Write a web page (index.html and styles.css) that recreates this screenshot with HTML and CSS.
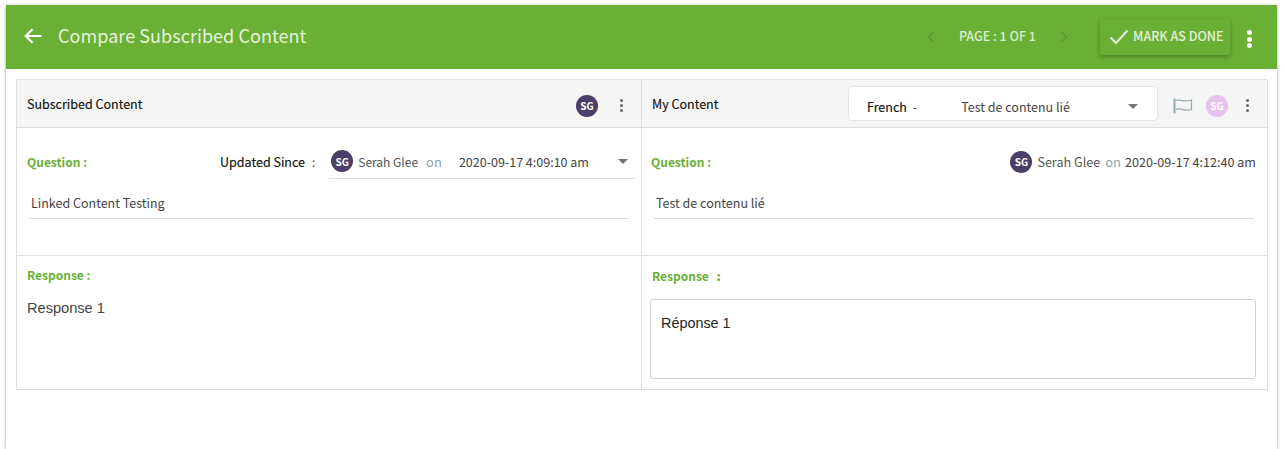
FILE: index.html
```html
<!DOCTYPE html>
<html lang="en">
<head>
<meta charset="utf-8">
<title>Compare Subscribed Content</title>
<link rel="stylesheet" href="styles.css">
</head>
<body>
<div class="frame">
  <header class="topbar">
    <svg class="back" width="20" height="18" viewBox="0 0 20 18"><path d="M18.5 9H3M9.5 2.2 2.7 9l6.8 6.8" fill="none" stroke="#fff" stroke-width="2.2"/></svg>
    <h1 class="title">Compare Subscribed Content</h1>
    <div class="pager">
      <svg width="10" height="14" viewBox="0 0 10 14"><path d="M8 1.5 2.5 7 8 12.500" fill="none" stroke="#5d9a33" stroke-width="1.600"/></svg>
      <span class="page-text">PAGE : 1 OF 1</span>
      <svg width="10" height="14" viewBox="0 0 10 14"><path d="M2 1.500 7.500 7 2 12.500" fill="none" stroke="#5d9a33" stroke-width="1.600"/></svg>
    </div>
    <button class="done">
      <svg width="20" height="16" viewBox="0 0 20 16"><path d="M1.500 8.500 7 14 18.500 1.500" fill="none" stroke="#e8f3df" stroke-width="2"/></svg>
      <span>MARK AS DONE</span>
    </button>
    <div class="kebab kebab-white"><i></i><i></i><i></i></div>
  </header>
  <main class="compare">
    <section class="cell head">
      <h2 class="head-title">Subscribed Content</h2>
      <span class="avatar dark push">SG</span>
      <div class="kebab kebab-grey"><i></i><i></i><i></i></div>
    </section>
    <section class="cell head head-right">
      <h2 class="head-title">My Content</h2>
      <div class="lang">
        <span class="lang-name">French</span><span class="lang-dash">-</span>
        <span class="lang-value">Test de contenu lié</span>
        <span class="caret"></span>
      </div>
      <svg class="flag" width="20" height="16" viewBox="0 0 20 16"><path d="M1.500 0.500V15.500" stroke="#93aab2" stroke-width="2" fill="none"/><path d="M2.500 2.500C7 0.500 10 5 18.500 2V11.500C11 14 7 9 2.500 11.500" fill="none" stroke="#93aab2" stroke-width="1.200"/></svg>
      <span class="avatar pink">SG</span>
      <div class="kebab kebab-grey"><i></i><i></i><i></i></div>
    </section>

    <section class="cell question">
      <div class="q-top">
        <span class="label">Question :</span>
        <span class="since">Updated Since <em>:</em></span>
        <div class="version">
          <span class="avatar dark">SG</span>
          <span class="who">Serah Glee</span><span class="on">on</span>
          <span class="date">2020-09-17 4:09:10 am</span>
          <span class="caret"></span>
        </div>
      </div>
      <p class="q-text">Linked Content Testing</p>
    </section>
    <section class="cell question question-right">
      <div class="q-top">
        <span class="label">Question :</span>
        <div class="stamp">
          <span class="avatar dark">SG</span>
          <span class="who">Serah Glee</span><span class="on">on</span>
          <span class="date">2020-09-17 4:12:40 am</span>
        </div>
      </div>
      <p class="q-text">Test de contenu lié</p>
    </section>

    <section class="cell response">
      <span class="label">Response :</span>
      <p class="r-text">Response 1</p>
    </section>
    <section class="cell response response-right">
      <span class="label">Response <b>:</b></span>
      <div class="editor">Réponse 1</div>
    </section>
  </main>
</div>
</body>
</html>
```
FILE: styles.css
```css
* { box-sizing: border-box; }
html, body { margin: 0; height: 100%; overflow: hidden; background: #fff; }
body {
  padding: 5px 7px 0 6px;
  font-family: "Noto Sans CJK SC", "Noto Sans", sans-serif;
  color: #333;
}
.frame { height: 444px; box-shadow: 0 3px 3px 0 rgba(0,0,0,.2), 0 0 3px rgba(0,0,0,.22); background: #fff; }
.topbar {
  height: 64px;
  background: #6ab035;
  display: flex;
  align-items: center;
  padding-left: 17px;
  color: #fff;
}
.back { flex: none; margin-bottom: 2px; }
.title { margin: 0 0 4px 15px; font-size: 18px; font-weight: 400; color: #e6f2dc; line-height: 24px; letter-spacing: .05px; }
.pager { margin-left: auto; display: flex; align-items: center; font-size: 12.5px; font-weight: 500; color: #dcedcd; }
.page-text { margin: 0 23px 4px 23px; }
.done {
  margin-left: 31px;
  width: 130px;
  height: 36px;
  border: 0;
  border-radius: 2px;
  background: #6ab035;
  box-shadow: 0 2px 5px rgba(0,0,0,.28);
  display: flex;
  align-items: center;
  gap: 4px;
  padding: 0 0 4px 9px;
  font: 500 12.5px "Noto Sans CJK SC", "Noto Sans", sans-serif;
  color: #e4f1d9;
}
.done svg { margin-top: 4px; flex: none; }
.kebab { display: flex; flex-direction: column; align-items: center; flex: none; }
.kebab i { display: block; border-radius: 50%; }
.kebab-white { margin: 4px 25px 0 17px; gap: 1.5px; }
.kebab-white i { width: 5px; height: 5px; background: #fff; }
.kebab-grey { gap: 2px; }
.kebab-grey i { width: 3px; height: 3px; background: #666; }
.compare {
  margin: 10px 10px 0;
  display: grid;
  grid-template-columns: 625px 626px;
  grid-template-rows: 48px 128px 134px;
  border-top: 1px solid #dedede;
  border-left: 1px solid #dedede;
}
.cell { border-right: 1px solid #dedede; border-bottom: 1px solid #dedede; min-width: 0; }
.head { background: #f5f5f5; display: flex; align-items: center; padding: 4px 0 0 10px; }
.head-title { margin: 0 0 4px; font-size: 12.5px; font-weight: 400; color: #111; line-height: 18px; white-space: nowrap; -webkit-text-stroke: .15px #111; }
.push { margin-left: auto; }
.head > .kebab { margin: 0 18px 0 22px; }
.head-right > .kebab { margin: 0 18px 0 18px; }
.avatar {
  flex: none;
  width: 22px; height: 22px;
  border-radius: 50%;
  display: inline-flex; align-items: center; justify-content: center;
  font-size: 10px; font-weight: 700; color: #fff;
}
.dark { background: #4c3f67; }
.pink { background: #e6c3ef; margin-left: 13px; }
.lang {
  margin-left: auto;
  width: 310px;
  height: 35px;
  margin-top: -4px;
  background: #fff;
  border: 1px solid #dce6ea;
  border-radius: 4px;
  display: flex;
  align-items: center;
  padding: 6px 0 0 18px;
  font-size: 12.5px;
}
.lang-name { font-size: 12.5px; font-weight: 400; color: #111; -webkit-text-stroke: .15px #111; }
.lang-dash { margin-left: 6px; color: #555; }
.lang-value { margin-left: 44px; color: #444; }
.caret {
  width: 0; height: 0;
  border-left: 5px solid transparent;
  border-right: 5px solid transparent;
  border-top: 5px solid #757575;
  margin-left: auto;
}
.lang .caret { margin-right: 19px; }
.flag { margin-left: 15px; flex: none; }
.question { padding: 0 6px 0 10px; }
.question-right { padding-left: 9px; }
.q-top { display: flex; align-items: center; height: 65px; padding-top: 2px; }
.label { font-size: 12px; font-weight: 700; color: #6ab035; line-height: 16px; }
.since { margin-left: 133px; font-size: 12.5px; font-weight: 400; color: #111; white-space: nowrap; -webkit-text-stroke: .15px #111; }
.since em { font-style: normal; font-weight: 400; margin-left: 4px; color: #555; -webkit-text-stroke: 0; }
.version {
  margin-left: 14px;
  flex: 1;
  height: 35px;
  border-bottom: 1px solid #dedede;
  display: flex;
  align-items: center;
  padding: 0 7px 0 2px;
  font-size: 12.5px;
}
.who { margin-left: 5px; color: #555; }
.version .who { font-size: 12px; }
.on { margin-left: 5px; color: #8aa2ad; font-size: 13px; }
.version .on { margin-left: 8px; }
.date { color: #444; margin-left: 4px; }
.version .date { margin-left: 17px; }
.stamp { margin-left: auto; display: flex; align-items: center; font-size: 12.6px; padding-right: 5px; }
.q-text {
  margin: 0 0 0 2px;
  width: 600px;
  height: 26px;
  padding: 1px 0 0 2px;
  border-bottom: 1px solid #dedede;
  font-size: 12.5px;
  line-height: 18px;
  color: #444;
}
.question-right .q-text { margin-left: 3px; }
.response { padding: 11px 10px 0; }
.response .label { display: block; }
.r-text { margin: 15px 0 0; font: 14.6px/20px "Liberation Sans", sans-serif; color: #444; }
.response-right { padding: 12px 10px 0 8px; }
.response-right .label { margin-left: 2px; }
.response-right b { margin-left: 5px; }
.editor {
  margin-top: 15px;
  width: 606px;
  height: 80px;
  border: 1px solid #d2d2d2;
  border-radius: 3px;
  padding: 13px 10px;
  font: 14.4px/20px "Liberation Sans", sans-serif;
  color: #222;
}
```
